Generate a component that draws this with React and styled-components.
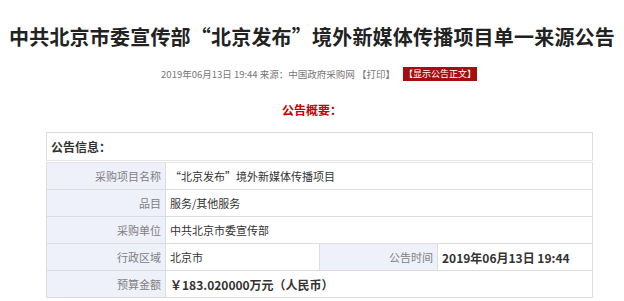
import styled, { createGlobalStyle } from "styled-components";

const GlobalStyle = createGlobalStyle`
  body {
    margin: 0;
    background: #fff;
    font-family: "Microsoft YaHei", "Noto Sans CJK SC", "Liberation Sans", sans-serif;
    color: #333;
  }
`;

const Page = styled.div`
  width: 624px;
  height: 301px;
  overflow: hidden;
`;

const Title = styled.h1`
  margin: 0;
  padding-top: 24px;
  text-align: center;
  font-size: 20px;
  line-height: 26px;
  font-weight: bold;
  color: #222;
  letter-spacing: 0.2px;
`;

const Meta = styled.div`
  margin-top: 17px;
  padding-left: 14px;
  display: flex;
  justify-content: center;
  align-items: center;
  gap: 8px;
  font-size: 9.5px;
  line-height: 14px;
  color: #777;
`;

const ShowBody = styled.span`
  background: #a80d0d;
  color: #fff;
  font-size: 9px;
  padding: 0 1px;
  line-height: 14px;
`;

const Summary = styled.div`
  margin-top: 22px;
  text-align: center;
  font-size: 12px;
  font-weight: bold;
  color: #c40000;
  line-height: 14px;
`;

const Table = styled.table`
  margin: 15px 0 0 46px;
  width: 547px;
  border-collapse: collapse;
  font-size: 11px;
  table-layout: fixed;
`;

const HeadCell = styled.td`
  height: 27px;
  border: 1px solid #ddd;
  border-bottom: 3px double #e4e4e4;
  padding: 0 4px;
  font-weight: bold;
  font-size: 12px;
  color: #333;
`;

const Label = styled.td`
  height: 26px;
  border: 1px solid #ddd;
  background: #eef1fa;
  color: #808080;
  text-align: right;
  padding: 0 4px;
`;

const Value = styled.td`
  height: 26px;
  border: 1px solid #ddd;
  padding: 0 4px;
  color: #333;
  font-weight: ${(p) => (p.$strong ? "bold" : "normal")};
  font-size: ${(p) => (p.$strong ? "12px" : "11px")};
`;

const rows = [
  { label: "采购项目名称", value: "“北京发布”境外新媒体传播项目" },
  { label: "品目", value: "服务/其他服务" },
  { label: "采购单位", value: "中共北京市委宣传部" },
];

function App() {
  return (
    <Page>
      <GlobalStyle />
      <Title>中共北京市委宣传部“北京发布”境外新媒体传播项目单一来源公告</Title>
      <Meta>
        <span>2019年06月13日 19:44 来源：中国政府采购网 【打印】</span>
        <ShowBody>【显示公告正文】</ShowBody>
      </Meta>
      <Summary>公告概要：</Summary>
      <Table>
        <colgroup>
          <col style={{ width: "119px" }} />
          <col style={{ width: "154px" }} />
          <col style={{ width: "118px" }} />
          <col />
        </colgroup>
        <tbody>
          <tr>
            <HeadCell colSpan={4}>公告信息：</HeadCell>
          </tr>
          {rows.map((row) => (
            <tr key={row.label}>
              <Label>{row.label}</Label>
              <Value colSpan={3}>{row.value}</Value>
            </tr>
          ))}
          <tr>
            <Label>行政区域</Label>
            <Value>北京市</Value>
            <Label>公告时间</Label>
            <Value $strong>2019年06月13日 19:44</Value>
          </tr>
          <tr>
            <Label>预算金额</Label>
            <Value colSpan={3} $strong>
              ￥183.020000万元（人民币）
            </Value>
          </tr>
        </tbody>
      </Table>
    </Page>
  );
}

export default App;
